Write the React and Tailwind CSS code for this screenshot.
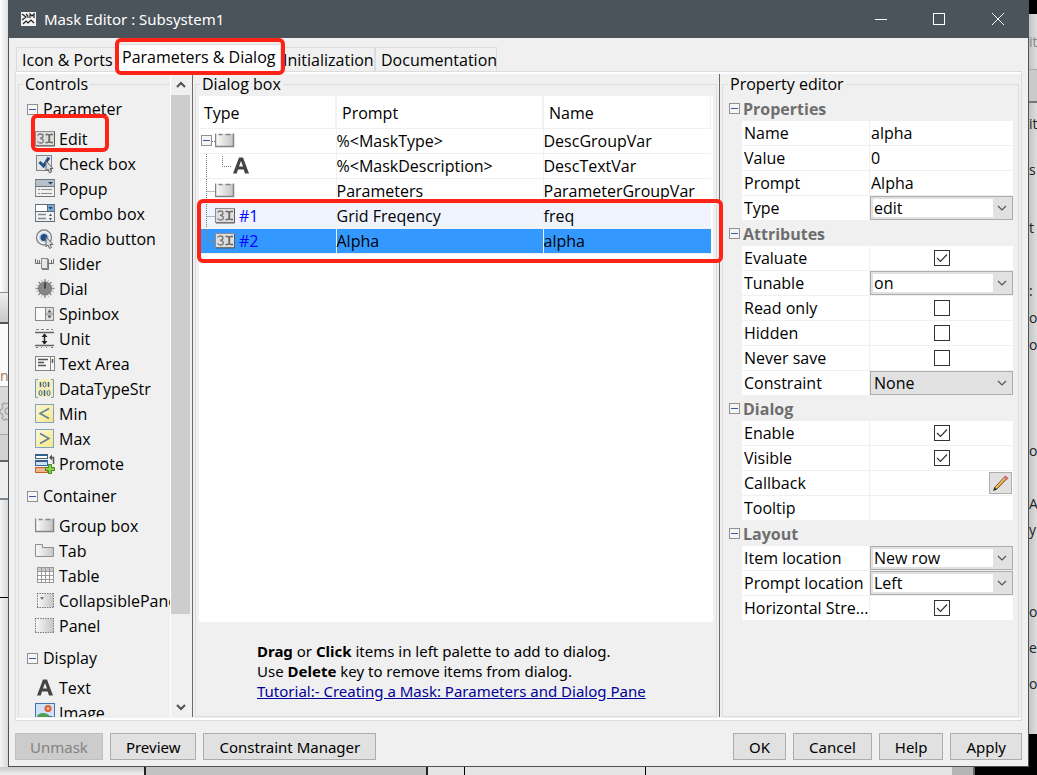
import { useState } from 'react';
import clsx from 'clsx';

const palette = [
  {
    title: 'Parameter',
    items: [
      { icon: 'edit', label: 'Edit', marked: true },
      { icon: 'check', label: 'Check box' },
      { icon: 'popup', label: 'Popup' },
      { icon: 'combo', label: 'Combo box' },
      { icon: 'radio', label: 'Radio button' },
      { icon: 'slider', label: 'Slider' },
      { icon: 'dial', label: 'Dial' },
      { icon: 'spin', label: 'Spinbox' },
      { icon: 'unit', label: 'Unit' },
      { icon: 'textarea', label: 'Text Area' },
      { icon: 'datatype', label: 'DataTypeStr' },
      { icon: 'min', label: 'Min' },
      { icon: 'max', label: 'Max' },
      { icon: 'promote', label: 'Promote' },
    ],
  },
  {
    title: 'Container',
    items: [
      { icon: 'group', label: 'Group box' },
      { icon: 'tab', label: 'Tab' },
      { icon: 'table', label: 'Table' },
      { icon: 'collapse', label: 'CollapsiblePanel' },
      { icon: 'panel', label: 'Panel' },
    ],
  },
  {
    title: 'Display',
    items: [
      { icon: 'text', label: 'Text' },
      { icon: 'image', label: 'Image' },
    ],
  },
];

const rows = [
  { icon: 'group', prompt: '%<MaskType>', name: 'DescGroupVar', tree: 'root' },
  { icon: 'text', prompt: '%<MaskDescription>', name: 'DescTextVar', tree: 'child' },
  { icon: 'group', prompt: 'Parameters', name: 'ParameterGroupVar', tree: 'branch' },
  { icon: 'edit', num: '#1', prompt: 'Grid Freqency', name: 'freq', tree: 'branch' },
  { icon: 'edit', num: '#2', prompt: 'Alpha', name: 'alpha', tree: 'last' },
];

const properties = [
  {
    title: 'Properties',
    fields: [
      { label: 'Name', type: 'text', value: 'alpha' },
      { label: 'Value', type: 'text', value: '0' },
      { label: 'Prompt', type: 'text', value: 'Alpha' },
      { label: 'Type', type: 'select', value: 'edit', options: ['edit', 'checkbox', 'popup'] },
    ],
  },
  {
    title: 'Attributes',
    fields: [
      { label: 'Evaluate', type: 'checkbox', value: true },
      { label: 'Tunable', type: 'select', value: 'on', options: ['on', 'off', 'run-to-run'] },
      { label: 'Read only', type: 'checkbox', value: false },
      { label: 'Hidden', type: 'checkbox', value: false },
      { label: 'Never save', type: 'checkbox', value: false },
      { label: 'Constraint', type: 'select', value: 'None', options: ['None'], flat: true },
    ],
  },
  {
    title: 'Dialog',
    fields: [
      { label: 'Enable', type: 'checkbox', value: true },
      { label: 'Visible', type: 'checkbox', value: true },
      { label: 'Callback', type: 'callback', value: '' },
      { label: 'Tooltip', type: 'text', value: '' },
    ],
  },
  {
    title: 'Layout',
    fields: [
      { label: 'Item location', type: 'select', value: 'New row', options: ['New row', 'Current row'] },
      { label: 'Prompt location', type: 'select', value: 'Left', options: ['Left', 'Top'] },
      { label: 'Horizontal Stre...', type: 'checkbox', value: true },
    ],
  },
];

const icons = {
  edit: (
    <>
      <rect x="0.5" y="2.5" width="19" height="14" fill="#dedede" stroke="#8c8c8c" />
      <path d="M1 17h18.500V3" fill="none" stroke="#5a5a5a" />
      <path d="M2.500 6.500q1-1.500 3-1.500 2.500 0 2.500 2t-3 2.300q3.300 0 3.300 2.400T5.500 14q-2 0-3-1.500" fill="none" stroke="#777" strokeWidth="1.300" />
      <path d="M10.500 5.500h2q1.500 0 1.500 1v6q0 1-1.500 1h-2M18 5.500h-2q-1.500 0-1.500 1v6q0 1 1.500 1h2" fill="none" stroke="#666" strokeWidth="1.300" />
    </>
  ),
  check: (
    <>
      <rect x="1.500" y="1.500" width="15" height="15" fill="#e3e5e8" stroke="#7e868e" />
      <path d="M4.500 8l4 4L14 3.500" fill="none" stroke="#1f4e86" strokeWidth="3" />
      <path d="M11 7v10l2-2 1.500 4 2-1-1.500-3.500h3z" fill="#ddd" stroke="#666" />
    </>
  ),
  popup: (
    <>
      <rect x="0.500" y="0.500" width="19" height="17" fill="#f0f0f0" stroke="#8a8a8a" />
      <rect x="1" y="1" width="18" height="6" fill="#b4c0cc" />
      <path d="M0 0.500h20M0 7.500h20M0 17.500h20" stroke="#6c7680" />
      <path d="M13 3h5l-2.500 2.500z" fill="#23415f" />
      <path d="M3 10.500h2m1 0h11M3 14.500h2m1 0h11" stroke="#8d8d8d" />
    </>
  ),
  combo: (
    <>
      <rect x="0.500" y="0.500" width="19" height="17" fill="#f0f0f0" stroke="#7b7b7b" />
      <rect x="1" y="1" width="11" height="6" fill="#fff" />
      <rect x="12" y="1" width="7" height="6" fill="#78a9d4" />
      <path d="M0 0.500h20M0 7.500h20M12.500 1v6M0 17.500h20" stroke="#5d6b78" />
      <path d="M13.500 3h4l-2 2.500z" fill="#23415f" />
      <path d="M3 10.500h8M3 14.500h8" stroke="#888" strokeWidth="1.500" />
      <path d="M14 12l1.500-2.500L17 12zM14 14h3l-1.500 2.500z" fill="#3b5876" />
    </>
  ),
  radio: (
    <>
      <circle cx="9" cy="8.500" r="7.500" fill="#f3f3f3" stroke="#858b91" strokeWidth="1.500" />
      <circle cx="9" cy="8.500" r="5" fill="#c3d0de" />
      <circle cx="9" cy="8.500" r="3.500" fill="#1f4e86" />
      <path d="M11 8v10l2-2 1.500 3.500 2-1-1.500-3h3z" fill="#ddd" stroke="#666" />
    </>
  ),
  slider: (
    <>
      <path d="M0.500 5v4.500h5M2.500 6v3M13.500 9.500h5V5M16.500 6v3M4.500 6v3" fill="none" stroke="#6d6d6d" />
      <rect x="6.500" y="4.500" width="6" height="10" fill="#e6e6e6" stroke="#888" />
      <path d="M7 15.500h6.500V5" fill="none" stroke="#777" />
    </>
  ),
  dial: (
    <>
      <path d="M10 0v19M0.500 9.500h19M3.500 3l13 13M16.500 3l-13 13" stroke="#8f8f8f" strokeWidth="1.500" />
      <path d="M6.300 0.800l7.400 17.400M13.700 0.800L6.300 18.200M1.200 6l17.600 7M18.800 6L1.200 13" stroke="#b5b5b5" />
      <circle cx="10" cy="9.500" r="6.500" fill="#868686" stroke="#757575" />
      <path d="M10 3.500v6" stroke="#333" strokeWidth="1.500" />
    </>
  ),
  spin: (
    <>
      <rect x="0.500" y="3.500" width="18" height="13" fill="#dedede" stroke="#888" />
      <rect x="1" y="4" width="9" height="12" fill="#fafafa" />
      <path d="M10.500 4v12M10.500 10h8" stroke="#888" />
      <path d="M12.500 8.500l2-3 2 3zM12.500 11.500h4l-2 3z" fill="#555" />
    </>
  ),
  unit: (
    <>
      <path d="M1 0.500h3m2 0h3m2 0h3m2 0h2" stroke="#888" />
      <path d="M0 3.500h19M0 16.500h19" stroke="#666" strokeWidth="1.500" />
      <path d="M1 18.500h2m3 0h1m4 0h1m4 0h2" stroke="#777" />
      <path d="M9.500 5v10" stroke="#222" strokeWidth="1.500" />
      <path d="M6.500 8l3-3.500 3 3.500zM6.500 12h6l-3 3.500z" fill="#222" />
    </>
  ),
  textarea: (
    <>
      <rect x="0.500" y="2.500" width="19" height="14" fill="#f7f7f7" stroke="#858585" />
      <path d="M15.500 3v13" stroke="#858585" />
      <path d="M17.500 5v4" stroke="#555" strokeWidth="1.500" />
      <path d="M3 5.500h10M3 8.500h6M3 11.500h8" stroke="#555" strokeWidth="1.500" />
    </>
  ),
  datatype: (
    <>
      <rect x="1" y="0" width="17" height="18" fill="#f6edbd" />
      <path d="M3 0.500H0.500v18H3M16 0.500h2.500v18H16" fill="none" stroke="#6f9cc0" />
      <path d="M5.500 3v5M13.500 3v5M9.500 11v6" stroke="#3f6182" strokeWidth="1.500" />
      <ellipse cx="9.500" cy="5.500" rx="1.500" ry="2.500" fill="none" stroke="#3f6182" />
      <ellipse cx="5.500" cy="14" rx="1.500" ry="2.500" fill="none" stroke="#3f6182" />
      <ellipse cx="13.500" cy="14" rx="1.500" ry="2.500" fill="none" stroke="#3f6182" />
    </>
  ),
  min: (
    <>
      <rect x="0.500" y="0.500" width="18" height="18" fill="url(#butter)" stroke="#7fa3c0" />
      <path d="M14 4.500L5 9.500l9 5" fill="none" stroke="#5b7f96" strokeWidth="1.500" />
    </>
  ),
  max: (
    <>
      <rect x="0.500" y="0.500" width="18" height="18" fill="url(#butter)" stroke="#7fa3c0" />
      <path d="M5 4.500l9 5-9 5" fill="none" stroke="#5b7f96" strokeWidth="1.500" />
    </>
  ),
  promote: (
    <>
      <rect x="0.500" y="0.500" width="12" height="4" fill="#fff" stroke="#3f5f80" />
      <rect x="0.500" y="6.500" width="12" height="5" fill="#cfe0f0" stroke="#2f6aa0" />
      <rect x="0.500" y="13.500" width="12" height="5" fill="#f0b488" stroke="#c5622a" />
      <path d="M0 1h13M0 7h13" stroke="#34608e" strokeWidth="2" />
      <path d="M18.500 10V3.500h-3" fill="none" stroke="#555" strokeWidth="1.500" />
      <path d="M14 3.500L17 0.500v6z" fill="#555" />
      <path d="M13.500 10.500h3v3h3v3h-3v3h-3v-3h-3v-3h3z" fill="#8fd04a" stroke="#3d8a1e" />
    </>
  ),
  group: (
    <>
      <path d="M1 3h17v12H1z" fill="url(#silver)" />
      <path d="M0.500 2.500v13h18v-13M3.500 3.500h4m3 0h5" fill="none" stroke="#858585" strokeWidth="1.500" />
    </>
  ),
  tab: <path d="M0.500 15.500v-12h7v3h11v9z" fill="url(#silver)" stroke="#8d8d8d" />,
  table: (
    <>
      <rect x="2.500" y="1.500" width="16" height="15" fill="#fff" stroke="#999" />
      <rect x="3" y="2" width="15" height="3" fill="#c9c9c9" />
      <path d="M3 5.500h15M3 9.500h15M3 13.500h15M6.500 2v14M10.500 2v14M14.500 2v14" stroke="#999" />
    </>
  ),
  collapse: (
    <>
      <rect x="2" y="3" width="16" height="13" fill="url(#silver)" />
      <path d="M2 2.500h17M2 16.500h17M2.500 2v15M18.500 2v15" stroke="#777" strokeDasharray="1.500 1" />
      <path d="M5 6h4l-2 3z" fill="#777" />
    </>
  ),
  panel: (
    <>
      <rect x="0" y="3" width="18" height="13" fill="url(#silver)" />
      <path d="M0 2.500h19M0 16.500h19M0.500 2v15M18.500 2v15" stroke="#777" strokeDasharray="1.500 1" />
    </>
  ),
  text: <path d="M2 17.500L8 1.500h4l6 16h-4l-1.300-4H7l-1.300 4zM8 10.500h4l-2-5.500z" fill="#444" fillRule="evenodd" />,
  image: (
    <>
      <rect x="0.500" y="0.500" width="19" height="19" fill="#cfe2f8" stroke="#4173b5" />
      <circle cx="13" cy="5.500" r="3.500" fill="#e8552a" />
      <circle cx="13" cy="5.500" r="1.500" fill="#f9c9a0" />
      <path d="M1 18q0-8 7-8t9 8z" fill="#4fa05c" />
      <path d="M9 19q4-8 10-5v5z" fill="#2f3f6a" />
    </>
  ),
};

function Icon({ name }) {
  return (
    <svg width="20" height="20" viewBox="0 0 20 20" className="shrink-0" aria-hidden="true">
      {icons[name]}
    </svg>
  );
}

function Expander() {
  return (
    <svg width="11" height="11" viewBox="0 0 11 11" className="shrink-0" aria-hidden="true">
      <rect x="0.500" y="0.500" width="10" height="10" fill="#f5f5f5" stroke="#919191" />
      <path d="M2 5.500h7" stroke="#3b57a6" />
    </svg>
  );
}

// red rectangle that marks a spot in the window
function Highlight({ className }) {
  return <div className={clsx('pointer-events-none absolute z-10 rounded-md border-4 border-[#ff2216]', className)} />;
}

function TitleBar() {
  return (
    <header className="flex h-[38px] items-center bg-[#4c545b] text-white">
      <svg width="15" height="14" viewBox="0 0 15 14" className="ml-3 mr-2" aria-hidden="true">
        <rect width="15" height="14" fill="#f2f2f2" />
        <path d="M1 2l4 3-4 3M6 5h2M9 6V2l2 2 2-2v4M2 12l3-3 2 2 3-3 3 3M5 2l2 2" fill="none" stroke="#222" strokeWidth="1.200" />
      </svg>
      <h1 className="flex-1 font-['Noto_Sans','Open_Sans',sans-serif] text-[15px]">Mask Editor : Subsystem1</h1>
      <button aria-label="Minimize" className="grid h-full w-[58px] place-items-center">
        <svg width="12" height="12" viewBox="0 0 12 12"><path d="M0 6.500h12" stroke="#fff" /></svg>
      </button>
      <button aria-label="Maximize" className="grid h-full w-[58px] place-items-center">
        <svg width="12" height="12" viewBox="0 0 12 12"><rect x="0.500" y="0.500" width="11" height="11" fill="none" stroke="#fff" /></svg>
      </button>
      <button aria-label="Close" className="grid h-full w-[60px] place-items-center">
        <svg width="12" height="12" viewBox="0 0 12 12"><path d="M0 0l12 12M12 0L0 12" stroke="#fff" /></svg>
      </button>
    </header>
  );
}

function Tabs() {
  const tab = 'h-6 whitespace-nowrap border border-b-0 border-[#dcdcdc]';
  return (
    <nav className="flex h-[33px] items-end pl-[7px]">
      <button className={clsx(tab, 'w-[101px] pl-[5px] text-left')}>Icon & Ports</button>
      <button className="relative h-[27px] w-[164px] whitespace-nowrap border border-b-0 border-[#dcdcdc] bg-white pb-[2px] pl-1 text-left">
        Parameters & Dialog
        <Highlight className="-left-[3px] -right-[5px] -top-[7px] -bottom-1" />
      </button>
      <button className={clsx(tab, 'w-[94px] pl-px text-left')}>Initialization</button>
      <button className={clsx(tab, 'w-[122px] pl-[5px] text-left')}>Documentation</button>
    </nav>
  );
}

function Palette() {
  return (
    <div className="flex w-[177px] shrink-0 border-r border-[#696969]">
      <div className="min-w-0 flex-1 overflow-hidden pl-[2px]">
        <fieldset className="w-[200px] border border-[#dcdcdc] pl-2 pt-[3px]">
          <legend className="-ml-1 px-[2px] leading-5">Controls</legend>
          {palette.map((g) => (
            <section key={g.title} className="mb-2">
              <h2 className="flex h-6 items-center gap-[5px]">
                <Expander /> {g.title}
              </h2>
              <ul className="mt-[5px] pl-2">
                {g.items.map((it) => (
                  <li key={it.label} className="relative flex h-[25px] items-center gap-1">
                    <Icon name={it.icon} /> {it.label}
                    {it.marked && <Highlight className="-left-1 -top-3 h-[38px] w-[78px]" />}
                  </li>
                ))}
              </ul>
            </section>
          ))}
        </fieldset>
      </div>
      {/* scrollbar */}
      <div className="mr-[2px] flex w-5 flex-col border-l border-white">
        <button aria-label="Scroll up" className="grid h-[21px] place-items-center">
          <svg width="10" height="7" viewBox="0 0 10 7"><path d="M1 6l4-4 4 4" fill="none" stroke="#505050" strokeWidth="2" /></svg>
        </button>
        <div className="flex flex-1 flex-col">
          <div className="h-[86%] bg-[#cdcdcd]" />
        </div>
        <button aria-label="Scroll down" className="grid h-[19px] place-items-center">
          <svg width="10" height="7" viewBox="0 0 10 7"><path d="M1 1l4 4 4-4" fill="none" stroke="#505050" strokeWidth="2" /></svg>
        </button>
      </div>
    </div>
  );
}

function TreeCell({ row }) {
  const dots = { fill: 'none', stroke: row.tree === 'last' ? '#b07a50' : '#777', strokeDasharray: '1 1' };
  return (
    <div className="flex h-[24px] items-center pl-[2px]">
      {row.tree === 'root' ? (
        <>
          <Expander />
          <svg width="3" height="24"><path d="M0 12.500h3" {...dots} /></svg>
        </>
      ) : (
        <svg width={row.tree === 'child' ? 30 : 14} height="24" className="shrink-0">
          {row.tree === 'child' && <path d="M5.500 0v24M21.500 2v10.500h9" {...dots} />}
          {row.tree === 'branch' && <path d="M5.500 0v24M5.500 12.500h9" {...dots} />}
          {row.tree === 'last' && <path d="M5.500 0v12.500h9" {...dots} />}
        </svg>
      )}
      <Icon name={row.icon} />
      {row.num && <span className="ml-1 text-[#0000ff]">{row.num}</span>}
    </div>
  );
}

function DialogBox() {
  const [selected, setSelected] = useState('alpha');
  return (
    <div className="min-w-0 flex-1 border-r border-[#696969] px-[2px]">
      <fieldset className="relative flex h-full min-w-0 flex-col border border-[#dcdcdc] px-[3px]">
        <legend className="ml-px px-[2px] leading-5">Dialog box</legend>
        <Highlight className="left-px -right-[7px] top-[105px] h-16" />
        <div className="mt-[2px] flex-1 bg-white pr-[2px]">
          <table className="w-full table-fixed border-collapse">
            <thead>
              <tr className="h-8 border-b border-[#f0f0f0] text-left">
                <th className="w-[137px] border-r-2 border-[#f0f0f0] p-0 pl-[5px] pt-[3px] font-normal">Type</th>
                <th className="w-[207px] border-r-2 border-[#f0f0f0] p-0 pl-[5px] pt-[3px] font-normal">Prompt</th>
                <th className="border-r border-[#f0f0f0] p-0 pl-[5px] pt-[3px] font-normal">Name</th>
              </tr>
            </thead>
            <tbody>
              {rows.map((r) => (
                <tr
                  key={r.name}
                  onClick={() => setSelected(r.name)}
                  className={clsx(
                    'h-[25px] border-b border-[#f0f0f0]',
                    r.name === selected ? 'bg-[#3399ff]' : r.name === 'freq' ? 'bg-[#f0f4ff]' : 'bg-white'
                  )}
                >
                  <td className="border-r border-[#f0f0f0] p-0"><TreeCell row={r} /></td>
                  <td className="border-r border-[#f0f0f0] p-0">{r.prompt}</td>
                  <td className="p-0">{r.name}</td>
                </tr>
              ))}
            </tbody>
          </table>
        </div>
        <div className="whitespace-nowrap pb-[15px] pl-[58px] pt-[19px] font-['Noto_Sans','Open_Sans',sans-serif] text-[15px] leading-5">
          <p><b>Drag</b> or <b>Click</b> items in left palette to add to dialog.</p>
          <p>Use <b>Delete</b> key to remove items from dialog.</p>
          <p><a href="#tutorial" className="text-[#000099] underline">Tutorial:- Creating a Mask: Parameters and Dialog Pane</a></p>
        </div>
      </fieldset>
    </div>
  );
}

function Field({ field }) {
  const id = field.label.toLowerCase().replace(/\W+/g, '-');
  return (
    <div className="flex h-[25px] gap-px pb-px">
      <label htmlFor={id} className="w-[127px] shrink-0 whitespace-nowrap bg-white pl-[2px] leading-6">{field.label}</label>
      {field.type === 'text' && (
        <input id={id} type="text" defaultValue={field.value} className="min-w-0 flex-1 bg-white px-px outline-none" />
      )}
      {field.type === 'checkbox' && (
        <div className="grid min-w-0 flex-1 place-items-center bg-white">
          <div className="relative size-4">
            <input id={id} type="checkbox" defaultChecked={field.value} className="peer block size-4 appearance-none border border-[#333] bg-white" />
            <svg viewBox="0 0 16 16" className="pointer-events-none absolute inset-0 hidden size-4 peer-checked:block">
              <path d="M3 8l3.500 3.500L13 4.500" fill="none" stroke="#333" strokeWidth="1.200" />
            </svg>
          </div>
        </div>
      )}
      {field.type === 'select' && (
        <div className="flex min-w-0 flex-1 items-center border border-[#adadad] bg-[#e1e1e1] p-[2px]">
          <select
            id={id}
            defaultValue={field.value}
            className={clsx('h-full min-w-0 flex-1 appearance-none px-px leading-4 outline-none', !field.flat && 'bg-white')}
          >
            {field.options.map((o) => <option key={o}>{o}</option>)}
          </select>
          <svg width="17" height="10" viewBox="0 0 17 10" className="pointer-events-none shrink-0">
            <path d="M5 3l4 4 4-4" fill="none" stroke="#555" strokeWidth="1.200" />
          </svg>
        </div>
      )}
      {field.type === 'callback' && (
        <div className="flex min-w-0 flex-1 items-center bg-white pr-px">
          <input id={id} type="text" className="min-w-0 flex-1 outline-none" />
          <button aria-label="Edit callback" className="grid h-[22px] w-[23px] shrink-0 place-items-center border border-[#adadad] bg-[#e1e1e1]">
            <svg width="17" height="17" viewBox="0 0 17 17">
              <path d="M2 15l1-3L13 1.500 15 3.500 5 14z" fill="#d9a34a" stroke="#8a5a1e" />
              <path d="M3.500 13L13 3" stroke="#f3d08a" />
              <path d="M12 2l1.500-1.500L16.500 3 15 5z" fill="#e0608c" />
              <path d="M1 16l1.500-4 2.500 2.500z" fill="#333" />
            </svg>
          </button>
        </div>
      )}
    </div>
  );
}

function PropertyEditor() {
  return (
    <div className="w-[301px] shrink-0 px-[2px]">
      <fieldset className="h-full min-w-0 border border-[#dcdcdc] pl-[6px] pr-[5px]">
        <legend className="-ml-px px-[2px] leading-5">Property editor</legend>
        <div className="mt-[2px]">
          {properties.map((g) => (
            <section key={g.title}>
              <h2 className="flex h-[25px] items-center gap-[3px] font-bold text-[#6e6e6e]">
                <Expander /> {g.title}
              </h2>
              <div className="pl-[13px]">
                {g.fields.map((f) => <Field key={f.label} field={f} />)}
              </div>
            </section>
          ))}
        </div>
      </fieldset>
    </div>
  );
}

function Footer() {
  const btn = 'h-[27px] border border-[#adadad] bg-[#e1e1e1] px-[15px] leading-6';
  return (
    <footer className="flex gap-[7px] px-[6px] pb-[6px] pt-3 font-['Noto_Sans','Open_Sans',sans-serif] text-[15px]">
      <button disabled className="h-[27px] border border-[#bfbfbf] bg-[#cccccc] px-[14px] leading-6 text-[#838383]">Unmask</button>
      <button className={btn}>Preview</button>
      <button className={clsx(btn, 'mr-auto')}>Constraint Manager</button>
      <button className={btn}>OK</button>
      <button className={btn}>Cancel</button>
      <button className={btn}>Help</button>
      <button className={btn}>Apply</button>
    </footer>
  );
}

// slivers of the windows that lie behind the dialog
function LeftSliver() {
  return (
    <div className="flex flex-col overflow-hidden bg-[#fafafa] text-[#a0765a]">
      <div className="h-[293px] border-b border-[#8a8f94] bg-linear-to-r from-white to-[#dedede]" />
      <div className="h-[31px] border-b-2 border-[#555] bg-linear-to-b from-[#eee] to-[#c8c8c8]" />
      <div className="flex h-[62px] items-end text-sm">n</div>
      <div className="grid h-[49px] place-items-center overflow-hidden border-y border-[#aaa] bg-[#d9d9d9]">
        <svg width="8" height="22" viewBox="0 0 8 22" aria-hidden="true">
          <path d="M8 3l-2 1-2-1-2 2 1 2-1 2-2 1v3l2 1 1 2-1 2 2 2 2-1 2 1M8 8q-3 0-3 3t3 3" fill="none" stroke="#aaa" strokeWidth="1.500" />
        </svg>
      </div>
      <div className="h-[27px] border-b-2 border-[#666] bg-[#d2d2d2]" />
      <div className="h-[38px] border-b-2 border-[#7d8791] bg-[#eee]" />
      <div className="h-[98px] border-b border-black bg-linear-to-r from-[#f4f4f4] to-[#d8d8d8]" />
      <div className="flex-1 bg-linear-to-r from-[#f4f4f4] to-[#d8d8d8]" />
    </div>
  );
}

const fragments = [
  { text: '', look: 'h-[18px]' },
  { text: 'it', look: 'h-[38px] text-[#888] border-b border-[#aaa]' },
  { text: '', look: 'h-[33px] bg-[#c9c9c9] border-b-2 border-[#777]' },
  { text: '', look: 'h-[11px]' },
  { text: 'it', look: 'h-[46px]' },
  { text: 's', look: 'h-[58px]' },
  { text: 't', look: 'h-[63px]' },
  { text: ':', look: 'h-[27px]' },
  { text: 'o', look: 'h-[27px]' },
  { text: 'o', look: 'h-[106px]' },
  { text: 'o', look: 'h-[53px]' },
  { text: 'A', look: 'h-[26px]' },
  { text: 'y', look: 'h-[82px]' },
  { text: 'o', look: 'h-9' },
  { text: 'e', look: 'h-9' },
  { text: 'o', look: 'h-[60px]' },
];

function RightSliver() {
  return (
    <div className="flex flex-col overflow-hidden bg-linear-to-r from-[#c4c4c4] to-[#dedede] text-sm leading-5 text-[#222]">
      <div className="h-[14px] shrink-0 bg-black" />
      {fragments.map((f, i) => (
        <div key={i} className={clsx('shrink-0', f.look)}>{f.text}</div>
      ))}
      <div className="flex-1 bg-black" />
    </div>
  );
}

function BottomSliver() {
  return (
    <div className="col-span-3 flex bg-[#e4e4e4]">
      <div className="w-[144px] bg-linear-to-b from-[#c9c9c9] to-[#efefef]" />
      <div className="w-[284px] border-x-2 border-[#222] bg-[#c2c2c2]" />
      <div className="w-[37px] border-r border-black" />
      <div className="w-[181px] border-r border-black" />
      <div className="flex-1" />
      <div className="w-[23px] border-r-2 border-[#666] bg-[#b5b5b5]" />
      <div className="w-[62px] bg-black" />
    </div>
  );
}

export default function App() {
  return (
    <div className="grid h-screen grid-cols-[8px_minmax(0,1fr)_8px] grid-rows-[minmax(0,1fr)_8px] overflow-hidden font-['Open_Sans','Noto_Sans',sans-serif] text-base leading-5 text-black">
      <svg width="0" height="0" className="absolute" aria-hidden="true">
        <linearGradient id="silver">
          <stop offset="0" stopColor="#fafafa" />
          <stop offset="1" stopColor="#c6c6c6" />
        </linearGradient>
        <linearGradient id="butter" x2="1" y2="1">
          <stop offset="0" stopColor="#fcf8dc" />
          <stop offset="1" stopColor="#f6e77e" />
        </linearGradient>
      </svg>
      <LeftSliver />
      <main className="flex min-h-0 flex-col border border-t-0 border-[#4c545b] bg-[#f0f0f0]">
        <TitleBar />
        <Tabs />
        <div className="mx-[6px] flex min-h-0 flex-1 border border-[#dcdcdc]">
          <div className="flex min-h-0 min-w-0 flex-1 border-y-2 border-white pb-px">
            <Palette />
            <DialogBox />
            <PropertyEditor />
          </div>
        </div>
        <Footer />
      </main>
      <RightSliver />
      <BottomSliver />
    </div>
  );
}
